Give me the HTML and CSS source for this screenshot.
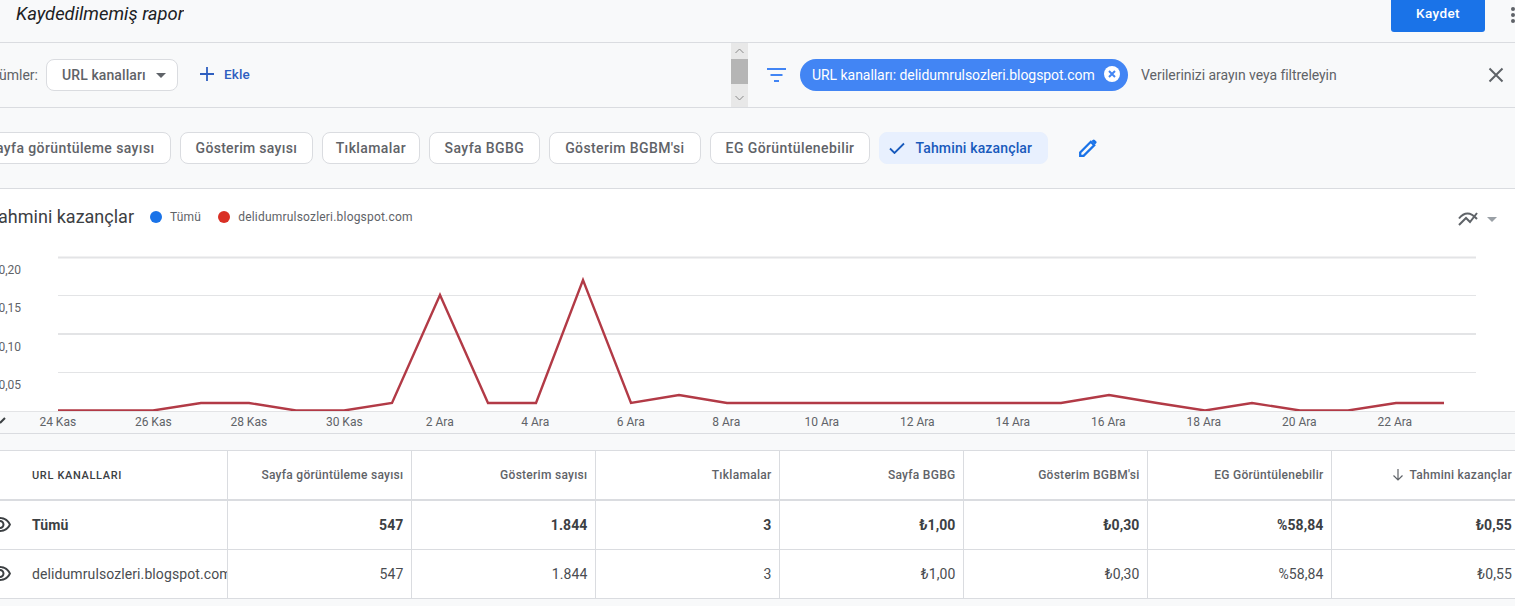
FILE: index.html
```html
<!DOCTYPE html>
<html lang="tr">
<head>
	<meta charset="utf-8">
	<meta name="viewport" content="width=device-width, initial-scale=1">
	<link rel="stylesheet" href="styles.css">
</head>
<body>
<header class="topbar">
   <div class="report-title">Kaydedilmemiş rapor</div>
   <button class="save-btn">Kaydet</button>
   <svg class="more-icon" width="6" height="18" viewBox="0 0 6 18"><circle cx="3" cy="3" r="2"/><circle cx="3" cy="9" r="2"/><circle cx="3" cy="15" r="2"/></svg>
</header>

<section class="filter-row">
   <div class="dimensions">
      <div class="clip-left dim-label"><span>Bölümler:</span></div>
      <button class="dim-btn">URL kanalları <i class="caret"></i></button>
      <button class="add-btn">
         <svg width="14" height="14" viewBox="0 0 14 14"><path d="M7 0v14M0 7h14" stroke="#2f5fc0" stroke-width="1.8" fill="none"/></svg>
         Ekle
      </button>
   </div>
   <div class="scrollbar">
      <svg class="scroll-arrow" width="17" height="16" viewBox="0 0 17 16"><path d="M4.500 10l4-4 4 4" stroke="#8a8a8a" fill="none"/></svg>
      <div class="scroll-thumb"></div>
      <svg class="scroll-arrow" width="17" height="23" viewBox="0 0 17 23"><path d="M4.500 12l4 4 4-4" stroke="#8a8a8a" fill="none"/></svg>
   </div>
   <div class="filters">
      <svg class="filter-icon" width="19" height="14" viewBox="0 0 19 14"><path d="M0 1h19M3.500 7h12M7 13h5" stroke="#4285f4" stroke-width="2" fill="none"/></svg>
      <div class="filter-chip">
         URL kanalları: delidumrulsozleri.blogspot.com
         <svg width="16" height="16" viewBox="0 0 16 16"><circle cx="8" cy="8" r="8" fill="#fff"/><path d="M5 5l6 6M11 5l-6 6" stroke="#4285f4" stroke-width="2"/></svg>
      </div>
      <div class="search-hint">Verilerinizi arayın veya filtreleyin</div>
      <svg class="close-icon" width="16" height="16" viewBox="0 0 16 16"><path d="M1.500 1.500l13 13M14.500 1.500l-13 13" stroke="#5f6368" stroke-width="2" fill="none"/></svg>
   </div>
</section>

<section class="metrics">
   <button class="metric first">Sayfa görüntüleme sayısı</button>
   <button class="metric tight">Gösterim sayısı</button>
   <button class="metric narrow">Tıklamalar</button>
   <button class="metric">Sayfa BGBG</button>
   <button class="metric">Gösterim BGBM'si</button>
   <button class="metric">EG Görüntülenebilir</button>
   <button class="metric active">
      <svg width="16" height="12" viewBox="0 0 16 12"><path d="M1 6.500l4.500 4.500L15 1.500" stroke="#185abc" stroke-width="1.800" fill="none"/></svg>
      Tahmini kazançlar
   </button>
   <svg class="pencil" width="18" height="18" viewBox="0 0 18 18"><path d="M1.200 16.800v-3.400L11.800 2.800l3.400 3.400L4.600 16.800z" fill="none" stroke="#1a73e8" stroke-width="2.300"/><path d="M12.500 2.100l1.200-1.200a1.500 1.500 0 0 1 2.100 0l1.300 1.300a1.500 1.500 0 0 1 0 2.100l-1.200 1.200z" fill="#1a73e8"/></svg>
</section>

<section class="chart">
   <div class="chart-head">
      <div class="clip-left chart-title"><span>Tahmini kazançlar</span></div>
      <div class="legend"><i class="dot blue"></i>Tümü</div>
      <div class="legend"><i class="dot red"></i>delidumrulsozleri.blogspot.com</div>
      <svg class="chart-type" width="20" height="14" viewBox="0 0 20 14"><path d="M1 6.500Q5 1.500 9.500 1.500T19 7M1 13l7-7 4 4 7-9" stroke="#5f6368" stroke-width="2" fill="none"/></svg>
      <i class="caret grey"></i>
   </div>
   <svg class="plot" width="1515" height="161" viewBox="0 250 1515 161">
      <g stroke="#e3e4e6" stroke-width="1">
         <path d="M58 257.500H1476" stroke-width="2"/>
         <path d="M58 295.500H1476"/>
         <path d="M58 334H1476" stroke-width="2"/>
         <path d="M58 372.500H1476"/>
      </g>
      <g class="y-label" text-anchor="end">
         <text x="21" y="274">₺0,20</text>
         <text x="21" y="312">₺0,15</text>
         <text x="21" y="351">₺0,10</text>
         <text x="21" y="389">₺0,05</text>
      </g>
      <polyline class="line" points="58,410.500 105,410.500 153,410.500 201,403 249,403 296,410.500 344,410.500 392,403 440,295 488,403 536,403 583,280 631,403 679,395 727,403 1061,403 1109,395 1157,403 1205,410.500 1252,403 1300,410.500 1348,410.500 1396,403 1444,403"/>
   </svg>
</section>

<div class="x-axis">
   <svg class="axis-tick" width="10" height="8" viewBox="0 0 10 8"><path d="M0 6l5-5" stroke="#3c4043" stroke-width="2"/></svg>
   <span>24 Kas</span><span>26 Kas</span><span>28 Kas</span><span>30 Kas</span><span>2 Ara</span><span>4 Ara</span><span>6 Ara</span><span>8 Ara</span><span>10 Ara</span><span>12 Ara</span><span>14 Ara</span><span>16 Ara</span><span>18 Ara</span><span>20 Ara</span><span>22 Ara</span>
</div>

<table class="report">
   <colgroup>
      <col class="col-name">
      <col class="col-num"><col class="col-num"><col class="col-num"><col class="col-num"><col class="col-num"><col class="col-num">
      <col class="col-last">
   </colgroup>
   <thead>
      <tr>
         <th class="name-head">URL KANALLARI</th>
         <th>Sayfa görüntüleme sayısı</th>
         <th>Gösterim sayısı</th>
         <th>Tıklamalar</th>
         <th>Sayfa BGBG</th>
         <th>Gösterim BGBM'si</th>
         <th>EG Görüntülenebilir</th>
         <th><svg class="sort" width="12" height="12" viewBox="0 0 12 12"><path d="M6 0v11M1.500 6.500L6 11l4.500-4.500" stroke="#5f6368" stroke-width="1.200" fill="none"/></svg> Tahmini kazançlar</th>
      </tr>
   </thead>
   <tbody>
      <tr class="total">
         <td class="name"><div class="name-cell"><svg width="24" height="24" viewBox="0 0 24 24"><path d="M12 6c3.790 0 7.170 2.130 8.820 5.500C19.170 14.870 15.790 17 12 17s-7.170-2.130-8.820-5.500C4.830 8.130 8.210 6 12 6m0-2C7 4 2.730 7.110 1 11.500 2.730 15.890 7 19 12 19s9.270-3.110 11-7.500C21.270 7.110 17 4 12 4zm0 5c1.380 0 2.500 1.120 2.500 2.500S13.380 14 12 14s-2.500-1.120-2.500-2.500S10.620 9 12 9m0-2c-2.480 0-4.500 2.020-4.500 4.500S9.520 16 12 16s4.500-2.020 4.500-4.500S14.480 7 12 7z"/></svg>Tümü</div></td>
         <td>547</td><td>1.844</td><td>3</td><td>₺1,00</td><td>₺0,30</td><td>%58,84</td><td>₺0,55</td>
      </tr>
      <tr>
         <td class="name"><div class="name-cell"><svg width="24" height="24" viewBox="0 0 24 24"><path d="M12 6c3.790 0 7.170 2.130 8.820 5.500C19.170 14.870 15.790 17 12 17s-7.170-2.130-8.820-5.500C4.830 8.130 8.210 6 12 6m0-2C7 4 2.730 7.110 1 11.500 2.730 15.890 7 19 12 19s9.270-3.110 11-7.500C21.270 7.110 17 4 12 4zm0 5c1.380 0 2.500 1.120 2.500 2.500S13.380 14 12 14s-2.500-1.120-2.500-2.500S10.620 9 12 9m0-2c-2.480 0-4.500 2.020-4.500 4.500S9.520 16 12 16s4.500-2.020 4.500-4.500S14.480 7 12 7z"/></svg>delidumrulsozleri.blogspot.com</div></td>
         <td>547</td><td>1.844</td><td>3</td><td>₺1,00</td><td>₺0,30</td><td>%58,84</td><td>₺0,55</td>
      </tr>
   </tbody>
</table>
</body>
</html>
```

FILE: styles.css
```css
body {
   margin: 0;
   height: 606px;
   overflow: hidden;
   background: #f8f9fa;
   font-family: Roboto, "Liberation Sans", sans-serif;
   font-size: 14px;
   color: #3c4043;
}

button {
   font-family: inherit;
   cursor: pointer;
}

.clip-left {
   display: flex;
   justify-content: flex-end;
   white-space: nowrap;
   flex: none;
}

.caret {
   display: inline-block;
   width: 0;
   height: 0;
   border-left: 5px solid transparent;
   border-right: 5px solid transparent;
   border-top: 5px solid #5f6368;
}

.caret.grey {
   border-top-color: #9aa0a6;
   margin-left: 9px;
}

/* top bar */
.topbar {
   height: 42px;
   box-sizing: border-box;
   display: flex;
   align-items: flex-start;
   padding-left: 16px;
}

.report-title {
   width: 168px;
   overflow: hidden;
   white-space: nowrap;
   font-size: 18.4px;
   font-style: italic;
   line-height: 27px;
   color: #202124;
}

.save-btn {
   margin-left: auto;
   width: 94px;
   height: 32px;
   border: none;
   border-radius: 0 0 3px 3px;
   background: #1a73e8;
   color: #fff;
   font-size: 13.5px;
   font-weight: 500;
   letter-spacing: 0.4px;
   padding: 0 0 6px;
}

.more-icon {
   margin: 6px -1px 0 25px;
   flex: none;
   fill: #5f6368;
}

/* dimensions and filters */
.filter-row {
   height: 64px;
   display: flex;
   border-top: 1px solid #dadce0;
   border-bottom: 1px solid #dadce0;
}

.dimensions {
   width: 731px;
   flex: none;
   display: flex;
   align-items: center;
}

.dim-label {
   width: 38px;
   color: #5f6368;
}

.dim-btn {
   margin-left: 8px;
   width: 132px;
   height: 32px;
   border: 1px solid #dadce0;
   border-radius: 8px;
   background: #fff;
   color: #5f6368;
   font-size: 14px;
   font-weight: 500;
   letter-spacing: 0.1px;
   display: flex;
   align-items: center;
   justify-content: space-between;
   padding: 0 11px 0 15px;
}

.add-btn {
   margin-left: 22px;
   border: none;
   background: none;
   padding: 0 0 2px;
   display: flex;
   align-items: center;
   gap: 10px;
   color: #2f5fc0;
   font-size: 13.5px;
   font-weight: 500;
   letter-spacing: 0.15px;
}

.scrollbar {
   width: 17px;
   flex: none;
   background: #e8e8e8;
   display: flex;
   flex-direction: column;
}

.scroll-thumb {
   height: 25px;
   background: #b5b5b5;
}

.filters {
   flex: 1;
   display: flex;
   align-items: center;
   padding: 0 11px 0 19px;
}

.filter-chip {
   margin-left: 14px;
   height: 32px;
   width: 328px;
   box-sizing: border-box;
   padding: 0 8px 0 12px;
   border-radius: 16px;
   background: #4285f4;
   color: #fff;
   letter-spacing: -0.05px;
   display: flex;
   align-items: center;
   justify-content: space-between;
   white-space: nowrap;
}

.filter-chip svg {
   margin-bottom: 3px;
}

.search-hint {
   margin-left: 13px;
   color: #5f6368;
   letter-spacing: -0.05px;
}

.close-icon {
   margin-left: auto;
}

/* metric chips */
.metrics {
   height: 81px;
   box-sizing: border-box;
   border-bottom: 1px solid #dadce0;
   display: flex;
   align-items: center;
   gap: 9px;
}

.metric {
   height: 32px;
   border: 1px solid #dadce0;
   border-radius: 8px;
   background: #fff;
   color: #5f6368;
   font-size: 14px;
   font-weight: 500;
   letter-spacing: 0.4px;
   padding: 0 15px;
   white-space: nowrap;
   flex: none;
}

.metric.first {
   margin-left: -29px;
}

.metric.tight {
   letter-spacing: 0.3px;
}

.metric.narrow {
   padding: 0 12.500px;
}

.metric.active {
   border-color: #e8f0fe;
   background: #e8f0fe;
   color: #185abc;
   letter-spacing: 0.15px;
   display: flex;
   align-items: center;
   gap: 10px;
   padding: 0 15px 0 9px;
}

.pencil {
   margin-left: 22px;
   flex: none;
}

/* chart */
.chart {
   background: #fff;
   height: 222px;
}

.chart-head {
   height: 61px;
   box-sizing: border-box;
   padding: 15px 18px 0 0;
   display: flex;
   align-items: flex-start;
}

.chart-title {
   width: 134px;
   font-size: 18px;
   line-height: 26px;
   color: #3c4043;
}

.legend {
   display: flex;
   align-items: center;
   height: 26px;
   font-size: 12px;
   letter-spacing: 0.2px;
   color: #5f6368;
   margin-left: 16px;
}

.legend + .legend {
   margin-left: 17px;
}

.dot {
   width: 12px;
   height: 12px;
   border-radius: 50%;
   margin-right: 8px;
}

.dot.blue {
   background: #1a73e8;
}

.dot.red {
   background: #d93025;
}

.chart-type {
   margin: 8px 0 0 auto;
}

.chart-head .caret {
   margin-top: 13px;
}

.plot {
   display: block;
}

.y-label {
   font-size: 12px;
   fill: #5f6368;
}

.line {
   fill: none;
   stroke: #b23a46;
   stroke-width: 2.4;
   stroke-linejoin: miter;
}

.x-axis {
   height: 19px;
   padding-bottom: 2px;
   border-top: 1px solid #e3e4e6;
   border-bottom: 1px solid #dadce0;
   display: flex;
   align-items: center;
   font-size: 12px;
   color: #5f6368;
}

.x-axis span {
   width: 95.5px;
   flex: none;
   text-align: center;
}

.axis-tick {
   flex: none;
   align-self: flex-start;
   margin-top: 5px;
}

/* table */
.report {
   margin-top: 16px;
   width: 1519px;
   table-layout: fixed;
   border-collapse: collapse;
   background: #fff;
   border-top: 1px solid #dadce0;
   border-bottom: 1px solid #dadce0;
}

.col-name {
   width: 227px;
}

.col-num {
   width: 184px;
}

.col-last {
   width: 188px;
}

.report th {
   height: 48px;
   padding: 0 7px 0 8px;
   text-align: right;
   font-size: 12px;
   font-weight: 500;
   letter-spacing: 0.28px;
   color: #5f6368;
   border-left: 1px solid #dadce0;
   border-bottom: 2px solid #dadce0;
   white-space: nowrap;
}

.report th.name-head {
   border-left: 0;
   padding-left: 32px;
   text-align: left;
   font-size: 11px;
   letter-spacing: 0.65px;
   color: #3c4043;
}

.sort {
   margin-right: 2px;
   vertical-align: -2px;
}

.report td {
   height: 48px;
   padding: 0 7px 0 8px;
   text-align: right;
   letter-spacing: 0.1px;
   color: #4a4d51;
   border-left: 1px solid #dadce0;
   border-bottom: 1px solid #dadce0;
   white-space: nowrap;
}

.report td.name {
   border-left: 0;
   padding: 0;
   overflow: hidden;
   text-align: left;
}

.name-cell {
   display: flex;
   align-items: center;
   gap: 20px;
   margin-left: -12px;
}

.name-cell svg {
   flex: none;
   fill: #3c4043;
}

.report .total td {
   font-weight: 700;
   color: #3c4043;
}
```
